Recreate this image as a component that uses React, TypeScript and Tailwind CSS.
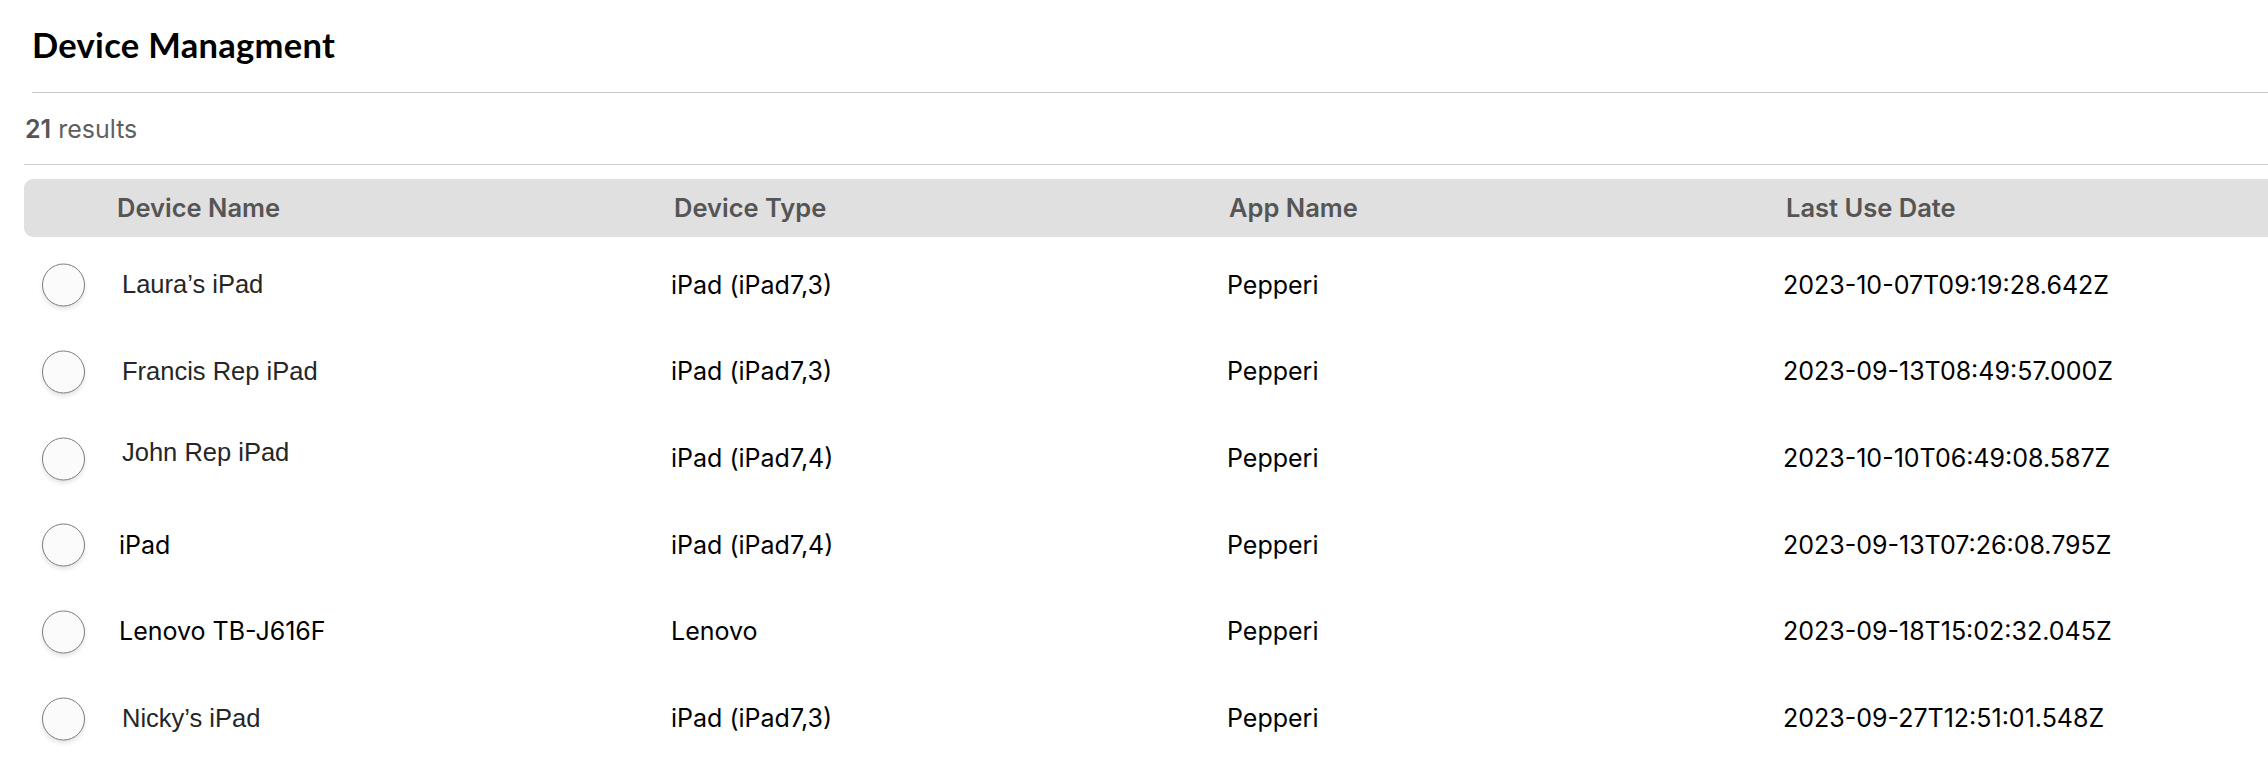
import React from "react";

type Row = {
  name: string;
  arial: boolean;
  nameShift?: number;
  type: string;
  app: string;
  date: string;
};

const rows: Row[] = [
  { name: "Laura’s iPad", arial: true, type: "iPad (iPad7,3)", app: "Pepperi", date: "2023-10-07T09:19:28.642Z" },
  { name: "Francis Rep iPad", arial: true, type: "iPad (iPad7,3)", app: "Pepperi", date: "2023-09-13T08:49:57.000Z" },
  { name: "John Rep iPad", arial: true, nameShift: 1, type: "iPad (iPad7,4)", app: "Pepperi", date: "2023-10-10T06:49:08.587Z" },
  { name: "iPad", arial: false, type: "iPad (iPad7,4)", app: "Pepperi", date: "2023-09-13T07:26:08.795Z" },
  { name: "Lenovo TB-J616F", arial: false, type: "Lenovo", app: "Pepperi", date: "2023-09-18T15:02:32.045Z" },
  { name: "Nicky’s iPad", arial: true, type: "iPad (iPad7,3)", app: "Pepperi", date: "2023-09-27T12:51:01.548Z" },
];

export default function App() {
  return (
    <div className="w-full h-[782px] overflow-hidden bg-white font-['Inter',sans-serif] text-black">
      <div className="pl-[24px]">
        <div className="pl-[8px]">
          <h1 className="h-[92px] flex items-center pb-[2px] font-['Lato',sans-serif] font-bold text-[34.5px] tracking-[0.3px] text-black">
            Device Managment
          </h1>
          <div className="h-px bg-[#cacaca]" />
        </div>
        <div className="h-[71px] flex items-center pl-[1px] pt-[3px] text-[25px] text-[#5f5f5f]">
          <span className="font-semibold text-[#555]">21</span>
          <span className="ml-[7px]">results</span>
        </div>
        <div className="h-px bg-[#cfcfcf]" />
        <div className="mt-[14px] h-[58px] bg-[#e0e0e0] rounded-l-[9px] grid grid-cols-[93px_557px_555px_557px_1fr] items-center text-[25.5px] font-semibold text-[#555]">
          <div />
          <div>Device Name</div>
          <div>Device Type</div>
          <div>App Name</div>
          <div>Last Use Date</div>
        </div>
        <div className="mt-[5px]">
          {rows.map((r, i) => (
            <div
              key={i}
              className="relative h-[86.7px] grid grid-cols-[95px_552px_556px_556px_1fr] items-center text-[25px] text-black"
            >
              <div className="absolute left-[18px] top-1/2 -translate-y-1/2 w-[43px] h-[43px] rounded-full border border-[#7d7d7d] bg-[#fbfbfb] shadow-[0_3px_4px_rgba(0,0,0,0.10)]" />
              <div />
              <div
                className={
                  r.arial
                    ? "pl-[3px] font-['Liberation_Sans',Arial,sans-serif] text-[25.5px] text-[#262626] " +
                      (r.nameShift ? "-translate-y-[7px]" : "-translate-y-[1px]")
                    : "text-[25px] text-black"
                }
              >
                {r.name}
              </div>
              <div>{r.type}</div>
              <div>{r.app}</div>
              <div>{r.date}</div>
            </div>
          ))}
        </div>
      </div>
    </div>
  );
}
